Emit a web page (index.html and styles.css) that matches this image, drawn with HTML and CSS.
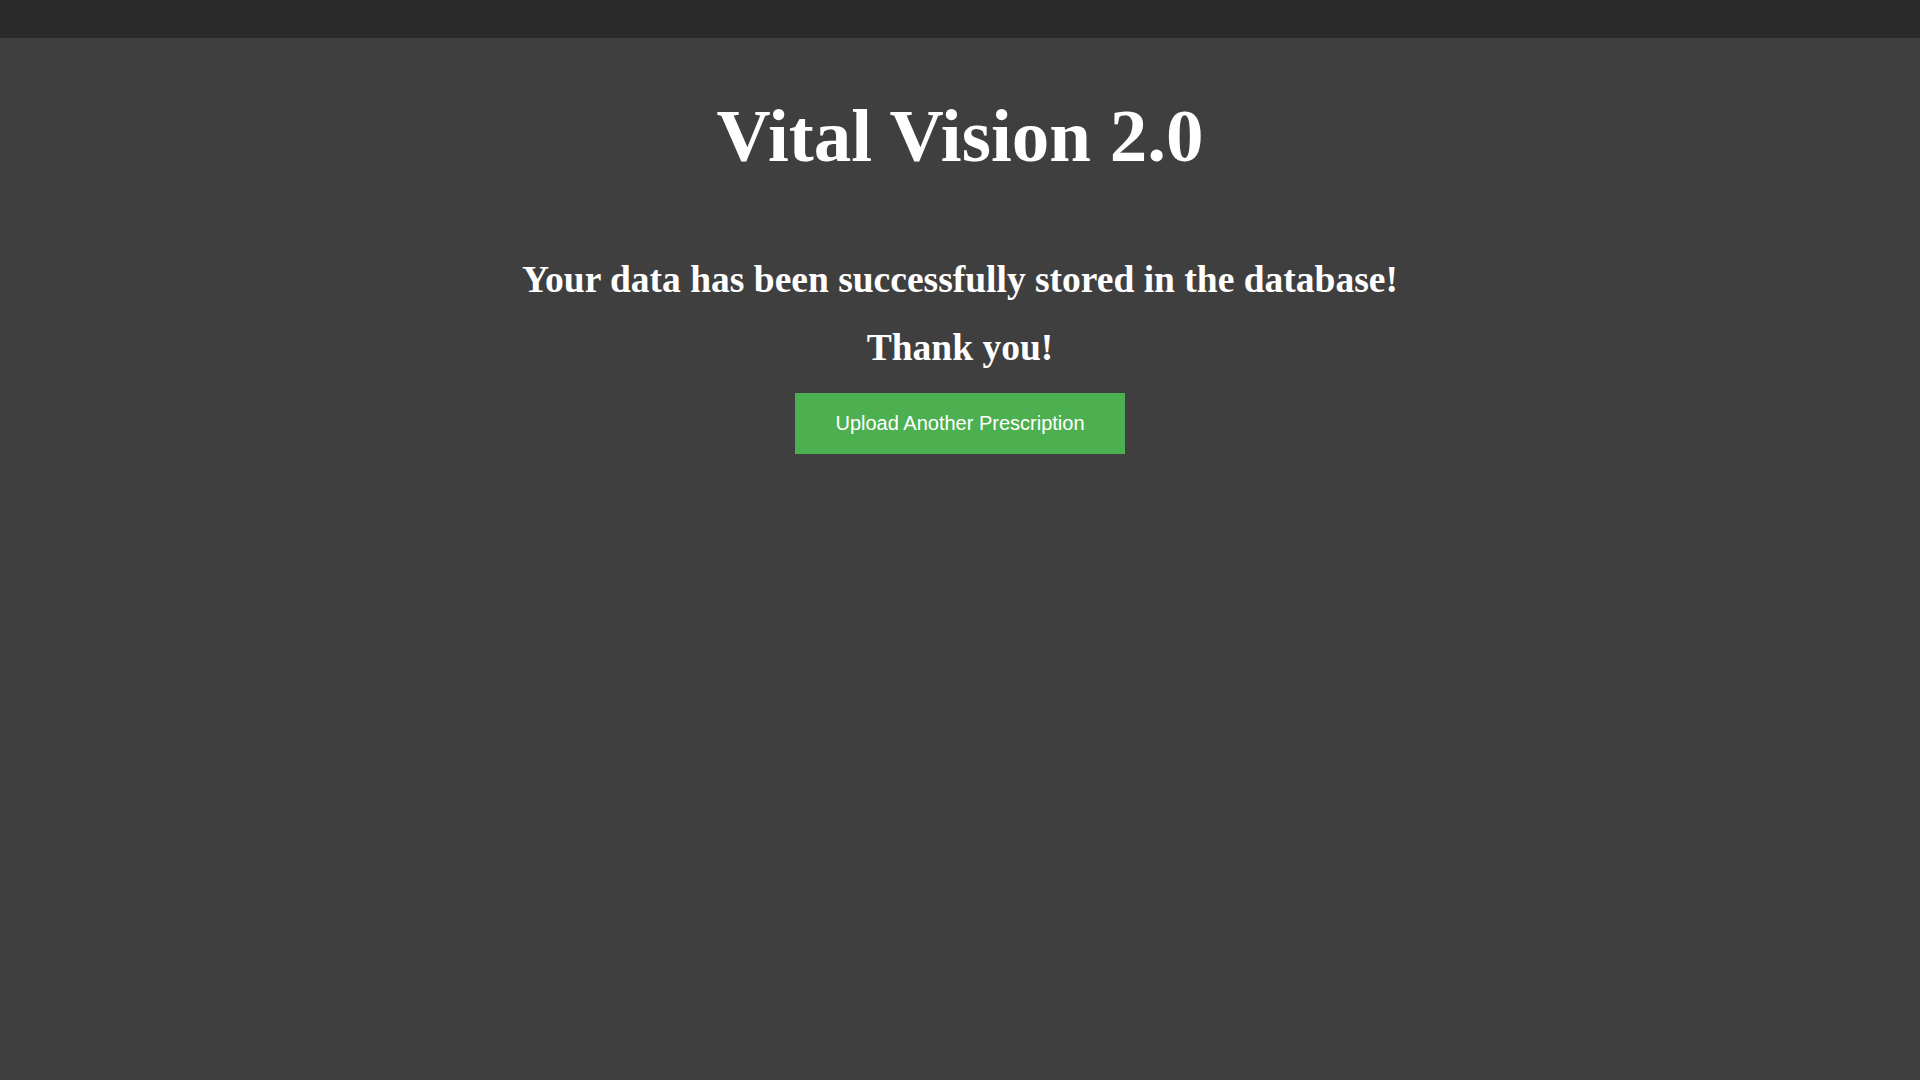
FILE: index.html
```html
<!DOCTYPE html>
<html lang="en">
<head>
<meta charset="utf-8">
<title>Vital Vision 2.0</title>
<link rel="stylesheet" href="styles.css">
</head>
<body>
<header class="topbar"></header>
<main class="content">
  <h1 class="title">Vital Vision 2.0</h1>
  <h2 class="message">Your data has been successfully stored in the database!</h2>
  <h2 class="message thanks">Thank you!</h2>
  <a class="upload-btn" href="#">Upload Another Prescription</a>
</main>
</body>
</html>
```
FILE: styles.css
```css
html, body {
  margin: 0;
  padding: 0;
  height: 100%;
}
body {
  background: #3f3f3f;
  color: #ffffff;
  font-family: "Liberation Serif", "Times New Roman", serif;
  display: flex;
  flex-direction: column;
}
.topbar {
  height: 38px;
  background: #2b2b2b;
  flex: none;
}
.content {
  display: flex;
  flex-direction: column;
  align-items: center;
  text-align: center;
}
.title {
  margin: 60px 0 0;
  font-size: 75px;
  line-height: 75px;
  font-weight: bold;
}
.message {
  margin: 88px 0 0;
  font-size: 37.5px;
  line-height: 38px;
  font-weight: bold;
}
.message.thanks {
  margin-top: 30px;
}
.upload-btn {
  margin-top: 26px;
  display: block;
  width: 330px;
  height: 61px;
  line-height: 61px;
  box-sizing: border-box;
  background: #4caf50;
  color: #ffffff;
  font-family: "Liberation Sans", Arial, sans-serif;
  font-size: 20px;
  text-decoration: none;
  text-align: center;
}
```
